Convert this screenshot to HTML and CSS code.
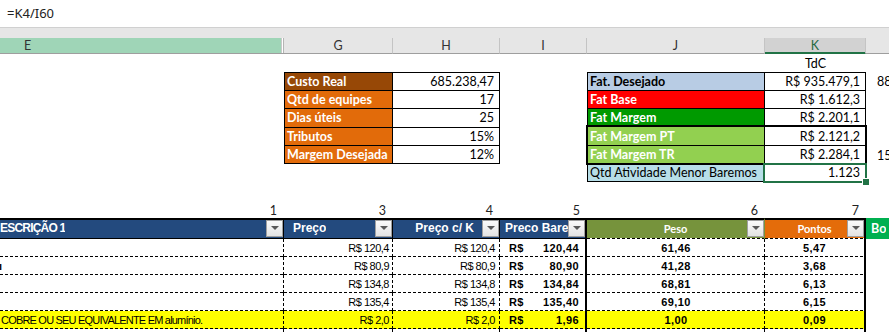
FILE: index.html
```html
<!DOCTYPE html>
<html lang="pt-BR">
<head>
<meta charset="utf-8">
<title>Planilha - Baremos</title>
<link rel="stylesheet" href="styles.css">
</head>
<body>
<div class="app">
  <div class="fx">=K4/I60</div>
  <div class="fx-gap"></div>
  <div class="cols">
    <div class="ch ch-e">E</div>
    <div class="ch">G</div>
    <div class="ch">H</div>
    <div class="ch">I</div>
    <div class="ch">J</div>
    <div class="ch ch-k">K</div>
    <div class="ch ch-l"></div>
  </div>

  <div class="top">
    <div class="tdc">TdC</div>

    <div class="box box-l">
      <div class="lb brown">Custo Real</div><div class="vl">685.238,47</div>
      <div class="lb orange">Qtd de equipes</div><div class="vl">17</div>
      <div class="lb orange">Dias úteis</div><div class="vl">25</div>
      <div class="lb orange">Tributos</div><div class="vl">15%</div>
      <div class="lb orange">Margem Desejada</div><div class="vl">12%</div>
    </div>

    <div class="box box-r">
      <div class="lb blue">Fat. Desejado</div><div class="vl">R$ 935.479,1</div>
      <div class="lb red">Fat Base</div><div class="vl">R$ 1.612,3</div>
      <div class="lb green">Fat Margem</div><div class="vl">R$ 2.201,1</div>
      <div class="grp">
        <div class="lb lime">Fat Margem PT</div><div class="vl">R$ 2.121,2</div>
        <div class="lb lime">Fat Margem TR</div><div class="vl">R$ 2.284,1</div>
      </div>
      <div class="lb cyan">Qtd Atividade Menor Baremos</div><div class="vl sel">1.123</div>
    </div>

    <div class="lcol lr2">88</div>
    <div class="lcol lr6">15</div>

    <div class="num c1">1</div>
    <div class="num c2">3</div>
    <div class="num c3">4</div>
    <div class="num c4">5</div>
    <div class="num c5">6</div>
    <div class="num c6">7</div>
  </div>

  <div class="tbl">
    <div class="trow th">
      <div class="hc blue-h e"><span class="tx">ESCRIÇÃO 1</span><span class="flt"></span></div>
      <div class="hc blue-h g"><span class="tx">Preço</span><span class="flt"></span></div>
      <div class="hc blue-h h"><span class="tx">Preço c/ K</span><span class="flt"></span></div>
      <div class="hc blue-h i"><span class="tx">Preco Baremos</span><span class="flt"></span></div>
      <div class="hc olive j"><span class="tx">Peso</span><span class="flt"></span></div>
      <div class="hc orange-h k"><span class="tx">Pontos</span><span class="flt"></span></div>
      <div class="hc lgreen l"><span class="tx">Bo</span></div>
    </div>

    <div class="trow">
      <div class="td dr e"></div>
      <div class="td dr r">R$ 120,4</div>
      <div class="td dr r h">R$ 120,4</div>
      <div class="td sr bar"><span>R$</span><span>120,44</span></div>
      <div class="td dr c">61,46</div>
      <div class="td sr c">5,47</div>
      <div class="tl"></div>
    </div>
    <div class="trow">
      <div class="td dr e"><span class="tail">ı</span></div>
      <div class="td dr r">R$ 80,9</div>
      <div class="td dr r h">R$ 80,9</div>
      <div class="td sr bar"><span>R$</span><span>80,90</span></div>
      <div class="td dr c">41,28</div>
      <div class="td sr c">3,68</div>
      <div class="tl"></div>
    </div>
    <div class="trow">
      <div class="td dr e"></div>
      <div class="td dr r">R$ 134,8</div>
      <div class="td dr r h">R$ 134,8</div>
      <div class="td sr bar"><span>R$</span><span>134,84</span></div>
      <div class="td dr c">68,81</div>
      <div class="td sr c">6,13</div>
      <div class="tl"></div>
    </div>
    <div class="trow">
      <div class="td dr e"></div>
      <div class="td dr r">R$ 135,4</div>
      <div class="td dr r h">R$ 135,4</div>
      <div class="td sr bar"><span>R$</span><span>135,40</span></div>
      <div class="td dr c">69,10</div>
      <div class="td sr c">6,15</div>
      <div class="tl"></div>
    </div>
    <div class="trow y">
      <div class="td dr e">COBRE OU SEU EQUIVALENTE EM alumínio.</div>
      <div class="td dr r">R$ 2,0</div>
      <div class="td dr r h">R$ 2,0</div>
      <div class="td sr bar"><span>R$</span><span>1,96</span></div>
      <div class="td dr c">1,00</div>
      <div class="td sr c">0,09</div>
      <div class="tl"></div>
    </div>
    <div class="trow">
      <div class="td dr e"></div>
      <div class="td dr r"></div>
      <div class="td dr r h"></div>
      <div class="td sr bar"></div>
      <div class="td dr c"></div>
      <div class="td sr c"></div>
      <div class="tl"></div>
    </div>
  </div>
</div>
</body>
</html>
```

FILE: styles.css
```css
* { box-sizing: border-box; margin: 0; padding: 0; }

:root {
  --cols: 284px 109px 107px 87px 178px 101px 1fr;
  --dash-h: repeating-linear-gradient(90deg, #000 0 3px, transparent 3px 5px);
  --dash-v: repeating-linear-gradient(180deg, #000 0 3px, transparent 3px 5px);
}

html, body {
  width: 889px;
  height: 332px;
  overflow: hidden;
  background: #fff;
}

body {
  font-family: "Lato", "Liberation Sans", sans-serif;
  color: #000;
}

.app { width: 889px; }

/* formula bar */
.fx {
  height: 28px;
  border-bottom: 1px solid #d0d0d0;
  padding-left: 7px;
  font: 13px/27px "Noto Sans", sans-serif;
  color: #222;
}

.fx-gap { height: 10px; background: #e6e6e6; }

/* column letters */
.cols {
  display: grid;
  grid-template-columns: var(--cols);
  height: 16px;
  background: #e6e6e6;
}

.ch {
  border-right: 1px solid #c4c4c4;
  border-bottom: 1px solid #9e9e9e;
  font: 12.5px/15px "Lato", sans-serif;
  color: #333;
  text-align: center;
}

.ch-e {
  text-align: left;
  padding-left: 24px;
  border-right: 0;
  background: linear-gradient(90deg, #9fd5b7 0 281px, #c9c9c9 281px 282px, #fff 282px 283px, #b5b5b5 283px);
}

.ch-k {
  background: #d2d2d2;
  color: #1e6b41;
  border-bottom-color: #217346;
  box-shadow: inset 0 -1px 0 #217346;
}

.ch-l { border-right: 0; }

/* top area */
.top {
  display: grid;
  grid-template-columns: var(--cols);
  grid-template-rows: 18px 18px 19px 18px 19px 18px 18px 18px 18px;
  font-size: 12.5px;
  line-height: 15px;
}

.tdc {
  grid-column: 6;
  grid-row: 1;
  align-self: center;
  text-align: center;
}

.box {
  display: grid;
  gap: 1px;
  padding: 1px;
  background: #000;
}

.box-l {
  grid-column: 2 / 4;
  grid-row: 2 / 7;
  grid-template-columns: 107px 1fr;
  grid-template-rows: repeat(5, 1fr);
}

.box-r {
  grid-column: 5 / 7;
  grid-row: 2 / 8;
  grid-template-columns: 176px 1fr;
  grid-template-rows: repeat(6, 1fr);
}

.grp {
  grid-column: 1 / -1;
  grid-row: 4 / 6;
  display: grid;
  grid-template-columns: 176px 1fr;
  grid-template-rows: 1fr 1fr;
  gap: 1px;
  background: #000;
  box-shadow: 0 0 0 2px #000;
  position: relative;
  z-index: 1;
}

.lb, .vl {
  display: flex;
  align-items: center;
  background: #fff;
  white-space: nowrap;
  overflow: hidden;
  min-width: 0;
}

.lb {
  padding-left: 2px;
  font-weight: 700;
  color: #fff;
}

.vl {
  justify-content: flex-end;
  padding-right: 5px;
}

.brown { background: #974806; }
.orange { background: #e26b0a; }
.blue { background: #b8cce4; color: #000; }
.red { background: #ff0000; }
.green { background: #009a00; }
.lime { background: #92d050; }
.cyan { background: #b7dee8; color: #000; font-weight: 400; }

.sel {
  position: relative;
  overflow: visible;
  z-index: 2;
}

.sel::after {
  content: "";
  position: absolute;
  inset: -1px -2px -2px -2px;
  border: 2px solid #217346;
}

.sel::before {
  content: "";
  position: absolute;
  right: -5px;
  bottom: -5px;
  width: 6px;
  height: 6px;
  background: #217346;
  border: 1px solid #fff;
  z-index: 1;
}

.lcol {
  grid-column: 7;
  padding-left: 11px;
  white-space: nowrap;
  overflow: hidden;
  align-self: center;
}

.lr2 { grid-row: 2; }
.lr6 { grid-row: 6; }

.num {
  grid-row: 9;
  align-self: end;
  text-align: right;
  padding-right: 7px;
  color: #222;
}

.c1 { grid-column: 1; }
.c2 { grid-column: 2; }
.c3 { grid-column: 3; }
.c4 { grid-column: 4; }
.c5 { grid-column: 5; }
.c6 { grid-column: 6; }

/* data table */
.tbl { font-family: "Liberation Sans", Arial, sans-serif; }

.trow {
  display: grid;
  grid-template-columns: var(--cols);
  height: 18px;
}

.trow.th { height: 21px; }

.hc {
  display: flex;
  align-items: flex-start;
  border-top: 2px solid #000;
  border-bottom: 1px solid #000;
  color: #fff;
  font-weight: 700;
  font-size: 12px;
  line-height: 17px;
  white-space: nowrap;
  overflow: hidden;
  min-width: 0;
}

.hc .tx {
  min-width: 0;
  overflow: hidden;
}

.blue-h { background: #234a7e; border-right: 1px solid #000; }

.hc.e { letter-spacing: -0.8px; }
.hc.g { padding-left: 9px; }
.hc.h .tx { margin-left: auto; margin-right: 8px; }
.hc.h .flt { margin-left: 0; }
.hc.i { padding-left: 5px; border-right: 2px solid #000; }

.olive, .orange-h {
  border-bottom: 0;
  font-family: "Lato", sans-serif;
  font-size: 11px;
}

.olive {
  border-right: 1px solid #76933c;
  background:
    var(--dash-h) left bottom / 100% 1px no-repeat,
    linear-gradient(#76933c, #76933c) left top / 100% calc(100% - 1px) no-repeat;
}

.orange-h {
  border-right: 2px solid #000;
  background:
    var(--dash-h) left bottom / 100% 1px no-repeat,
    linear-gradient(#e46c0a, #e46c0a) left top / 100% calc(100% - 1px) no-repeat;
}

.olive .tx, .orange-h .tx {
  flex: 1;
  text-align: center;
  padding-left: 17px;
}

.lgreen {
  background: #00b050;
  border-top: 0;
  border-bottom: 0;
  padding-left: 5px;
  align-items: center;
  font-family: "Lato", sans-serif;
  font-size: 12.5px;
}

.flt {
  flex: none;
  margin-left: auto;
  width: 17px;
  height: 17px;
  border: 1px solid #a0a0a0;
  background: linear-gradient(#fbfbfb, #e3e3e3);
  display: flex;
  align-items: center;
  justify-content: center;
}

.flt::after {
  content: "";
  width: 0;
  height: 0;
  border-left: 4px solid transparent;
  border-right: 4px solid transparent;
  border-top: 4px solid #595959;
  margin-top: -1px;
}

.td {
  display: flex;
  align-items: center;
  white-space: nowrap;
  overflow: hidden;
  min-width: 0;
  font-size: 11px;
  letter-spacing: -0.5px;
  padding-bottom: 1px;
  background: var(--dash-h) left bottom / 100% 1px no-repeat;
}

.td.dr {
  background:
    var(--dash-h) left bottom / 100% 1px no-repeat,
    var(--dash-v) right top / 1px 100% no-repeat;
}

.td.sr { border-right: 2px solid #000; }

.trow.y .td { background-color: #ffff00; }

.td.e { letter-spacing: -0.8px; padding-left: 1px; }
.tail { font-weight: 700; margin-left: -2px; }

.td.r { justify-content: flex-end; padding-right: 4px; }
.td.r.h { padding-right: 5px; }

.td.bar {
  justify-content: space-between;
  padding-left: 9px;
  padding-right: 6px;
  font-weight: 700;
  font-size: 11px;
  letter-spacing: 0.4px;
}

.td.c {
  justify-content: center;
  font-weight: 700;
  font-size: 11px;
  letter-spacing: 0.4px;
}
```
